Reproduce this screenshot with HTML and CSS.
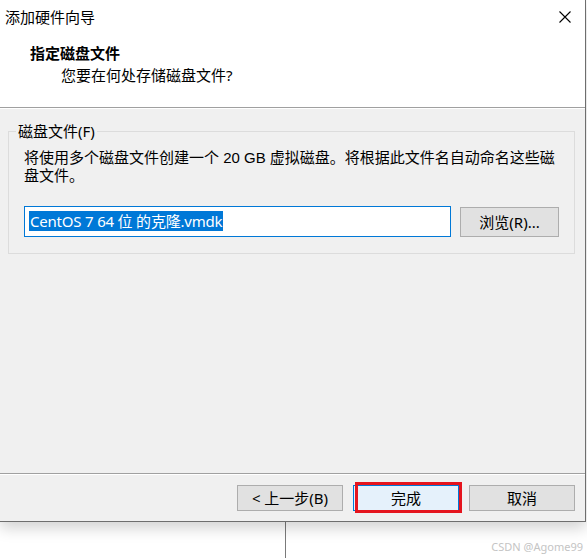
FILE: index.html
```html
<!DOCTYPE html>
<html lang="zh-CN">
<head>
<meta charset="utf-8">
<title>添加硬件向导</title>
<link rel="stylesheet" href="styles.css">
</head>
<body>
<div class="window">
  <div class="titlebar">
    <span class="title">添加硬件向导</span>
    <svg class="close" width="12" height="12" viewBox="0 0 12 12"><path d="M0.5 0.5L11.5 11.5M11.5 0.5L0.5 11.5" stroke="#000" stroke-width="1.1" fill="none"/></svg>
  </div>
  <div class="header">
    <h1 class="heading">指定磁盘文件</h1>
    <p class="subheading">您要在何处存储磁盘文件?</p>
  </div>
  <div class="rule"></div>
  <div class="content">
    <fieldset class="group">
      <legend class="group-label">磁盘文件(F)</legend>
      <p class="desc">将使用多个磁盘文件创建一个 20 GB 虚拟磁盘。将根据此文件名自动命名这些磁<br>盘文件。</p>
      <div class="file-row">
        <div class="textbox"><span class="selected">CentOS 7 64 位 的克隆.vmdk</span></div>
        <button class="btn browse">浏览(R)...</button>
      </div>
    </fieldset>
  </div>
  <div class="rule"></div>
  <div class="footer">
    <button class="btn">&lt; 上一步(B)</button>
    <div class="mark-wrap">
      <button class="btn primary">完成</button>
      <div class="mark"></div>
    </div>
    <button class="btn">取消</button>
  </div>
</div>
<div class="desktop">
  <div class="vline"></div>
</div>
<div class="watermark">CSDN @Agome99</div>
</body>
</html>
```

FILE: styles.css
```css
html, body {
  margin: 0;
  padding: 0;
}
body {
  width: 587px;
  height: 558px;
  overflow: hidden;
  background: #fff;
  position: relative;
  font-family: "Noto Sans", "Noto Sans CJK SC", sans-serif;
  font-size: 15px;
  color: #000;
}
.window {
  width: 586px;
  box-sizing: border-box;
  border-right: 1px solid #6e6e6e;
  border-bottom: 1px solid #6e6e6e;
  box-shadow: 0 6px 14px rgba(0, 0, 0, 0.18);
  background: #f0f0f0;
  position: relative;
  z-index: 1;
}
.titlebar {
  height: 32px;
  background: #fff;
  display: flex;
  align-items: center;
  justify-content: space-between;
  padding: 1px 14px 0 5px;
  box-sizing: border-box;
}
.title {
  line-height: 20px;
}
.close {
  display: block;
}
.header {
  height: 75px;
  background: #fff;
  padding: 11px 0 0 30px;
  box-sizing: border-box;
}
.heading {
  margin: 0;
  font-size: 15px;
  font-weight: bold;
  line-height: 20px;
}
.subheading {
  margin: 2px 0 0 31px;
  line-height: 20px;
}
.rule {
  height: 0;
  border-top: 1px solid #a0a0a0;
  border-bottom: 1px solid #fff;
}
.content {
  height: 364px;
  box-sizing: border-box;
  padding: 12px 12px 0 8px;
}
.group {
  margin: 0;
  padding: 0 15px 16px 15px;
  border: 1px solid #dcdcdc;
  width: 566px;
  box-sizing: border-box;
}
.group-label {
  margin-left: -8px;
  padding: 0 2px;
  line-height: 20px;
}
.desc {
  margin: 8px 0 0;
  font-family: "Liberation Sans", "Noto Sans CJK SC", sans-serif;
  line-height: 18px;
  white-space: nowrap;
}
.file-row {
  display: flex;
  align-items: flex-start;
  gap: 9px;
  margin-top: 21px;
}
.textbox {
  width: 427px;
  height: 31px;
  box-sizing: border-box;
  border: 1px solid #0078d7;
  background: #fff;
  padding: 4px 0 0 4px;
}
.selected {
  display: inline-block;
  background: #0078d7;
  color: #fff;
  line-height: 20px;
  padding: 0 1px;
  letter-spacing: -0.2px;
}
.btn {
  font-family: "Noto Sans", "Noto Sans CJK SC", sans-serif;
  font-size: 15px;
  color: #000;
  background: #e1e1e1;
  border: 1px solid #adadad;
  width: 106px;
  height: 26px;
  padding: 0;
  margin: 0;
  line-height: 22px;
  box-sizing: border-box;
}
.browse {
  width: 99px;
  height: 30px;
  margin-top: 1px;
}
.footer {
  height: 46px;
  box-sizing: border-box;
  padding: 10px 10px 0 0;
  display: flex;
  justify-content: flex-end;
  align-items: flex-start;
  gap: 10px;
}
.mark-wrap {
  position: relative;
}
.primary {
  display: block;
  background: #e5f1fb;
  border-color: #0078d7;
}
.mark {
  position: absolute;
  left: 2px;
  top: -3px;
  width: 107px;
  height: 31px;
  box-sizing: border-box;
  border: 3px solid #e5141d;
}
.desktop {
  height: 36px;
  display: flex;
}
.vline {
  margin-left: 285px;
  width: 1px;
  height: 36px;
  background: #7a7a7a;
}
.watermark {
  position: absolute;
  right: 4px;
  bottom: 4px;
  font-family: "Noto Sans", sans-serif;
  font-size: 11px;
  line-height: 14px;
  color: #c4c4c4;
}
```
